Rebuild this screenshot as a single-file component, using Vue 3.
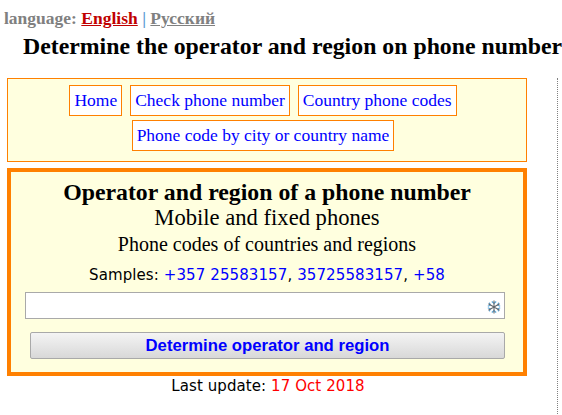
<script setup>
const menu = [
  ["Home", "Check phone number", "Country phone codes"],
  ["Phone code by city or country name"],
];
</script>

<template>
  <div class="page">
    <div class="lang">
      language: <a class="cur" href="#">English</a> <span class="sep">|</span> <a class="other" href="#">Русский</a>
    </div>
    <h1>Determine the operator and region on phone number</h1>
    <div class="columns">
      <div class="main">
        <nav class="menu">
          <div v-for="(row, i) in menu" :key="i" class="menu-row">
            <a v-for="item in row" :key="item" href="#">{{ item }}</a>
          </div>
        </nav>
        <section class="lookup">
          <h2>Operator and region of a phone number</h2>
          <div class="sub1">Mobile and fixed phones</div>
          <div class="sub2">Phone codes of countries and regions</div>
          <div class="samples">
            Samples: <a href="#">+357 25583157</a>, <a href="#">35725583157</a>, <a href="#">+58</a>
          </div>
          <div class="field">
            <input type="text" />
            <svg class="snow" width="14" height="14" viewBox="0 0 14 14">
              <g stroke="#5aa5d6" stroke-width="1.2" fill="none">
                <path d="M4.8 1.5L7 3.4L9.2 1.5M4.8 12.5L7 10.6L9.2 12.5M0.8 6.2L3.2 5.2L2.4 2.6M13.2 6.2L10.8 5.2L11.6 2.6M0.8 7.8L3.2 8.8L2.4 11.4M13.2 7.8L10.8 8.8L11.6 11.4" />
              </g>
              <g stroke="#63676b" stroke-width="1.1" fill="none">
                <path d="M7 0.5V13.5M1.4 3.8L12.6 10.2M12.6 3.8L1.4 10.2" />
              </g>
            </svg>
          </div>
          <button type="button">Determine operator and region</button>
        </section>
        <div class="updated">Last update: <span>17 Oct 2018</span></div>
      </div>
      <div class="side"></div>
    </div>
  </div>
</template>

<style scoped>
.page {
  width: 562px;
  height: 415px;
  overflow: hidden;
  font-family: "Liberation Serif", "Times New Roman", serif;
  color: #000;
  background: #fff;
}

.lang {
  padding: 9px 0 0 4px;
  height: 18px;
  line-height: 18px;
  font-size: 17.5px;
  font-weight: bold;
  color: #808080;
}

.lang .cur {
  color: #c00000;
}

.lang .other {
  color: #808080;
}

.lang .sep {
  color: #5b9bd5;
}

h1 {
  margin: 5px 0 0;
  padding-left: 23px;
  height: 28px;
  line-height: 28px;
  font-size: 23.8px;
  font-weight: bold;
  white-space: nowrap;
}

.columns {
  display: flex;
  margin-top: 18px;
  padding-left: 7px;
}

.main {
  width: 520px;
}

.menu {
  box-sizing: border-box;
  height: 84px;
  padding: 6px 8px 0 0;
  border: 1px solid #ff8000;
  background: #ffffdf;
}

.menu-row {
  display: flex;
  justify-content: center;
  gap: 8px;
  margin-bottom: 4px;
}

.menu-row a {
  box-sizing: border-box;
  height: 31px;
  line-height: 29px;
  padding: 0 4px;
  border: 1px solid #ff8000;
  background: #fff;
  color: #0000ff;
  font-size: 17.5px;
  text-decoration: none;
  white-space: nowrap;
}

.lookup {
  box-sizing: border-box;
  height: 208px;
  margin-top: 6px;
  padding-top: 7px;
  border: 4px solid #ff8000;
  background: #ffffdf;
  text-align: center;
}

h2 {
  margin: 0;
  height: 26px;
  line-height: 26px;
  font-size: 23.8px;
  font-weight: bold;
}

.sub1 {
  height: 26px;
  line-height: 26px;
  font-size: 22.6px;
}

.sub2 {
  height: 27px;
  line-height: 27px;
  font-size: 20px;
}

.samples {
  height: 34px;
  padding-top: 1px;
  box-sizing: border-box;
  line-height: 33px;
  font-family: "DejaVu Sans", Verdana, sans-serif;
  font-size: 15px;
  letter-spacing: 0.1px;
}

.samples a {
  color: #0000ff;
  text-decoration: none;
}

.field {
  position: relative;
  width: 480px;
  margin: 0 0 13px 14px;
}

.field input {
  display: block;
  box-sizing: border-box;
  width: 480px;
  height: 27px;
  border: 1px solid #a9a9a9;
  background: #fff;
  outline: none;
}

.snow {
  position: absolute;
  right: 4px;
  top: 8px;
}

button {
  display: block;
  box-sizing: border-box;
  width: 475px;
  height: 27px;
  margin-left: 19px;
  padding: 0;
  border: 1px solid #a9a9a9;
  border-radius: 2px;
  background: linear-gradient(180deg, #f4f4f4 0%, #d8d8d8 100%);
  color: #0000ff;
  font-family: "Liberation Sans", Arial, sans-serif;
  font-size: 16.7px;
  font-weight: bold;
}

.updated {
  height: 20px;
  line-height: 20px;
  padding-left: 2px;
  text-align: center;
  font-family: "DejaVu Sans", Verdana, sans-serif;
  font-size: 15px;
  letter-spacing: 0.08px;
}

.updated span {
  color: #ff0000;
}

.side {
  width: 0;
  height: 340px;
  margin-left: 30px;
  border-left: 1px dotted #808080;
}
</style>

<style>
html,
body {
  margin: 0;
  overflow: hidden;
}
</style>
